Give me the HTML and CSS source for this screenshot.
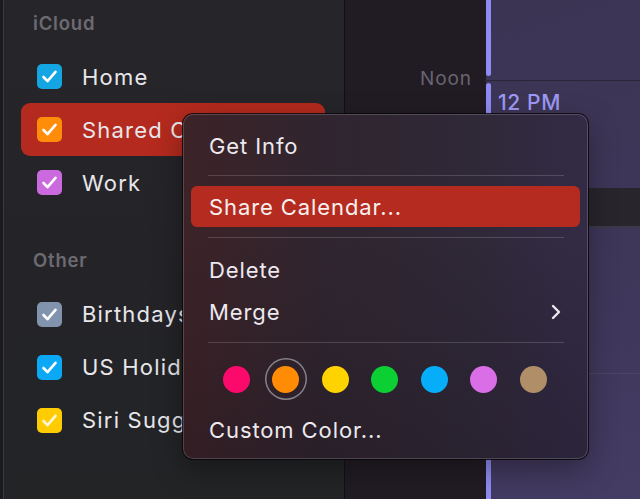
FILE: index.html
```html
<!DOCTYPE html>
<html lang="en">
<head>
<meta charset="utf-8">
<title>Calendar</title>
<link rel="stylesheet" href="styles.css">
</head>
<body>
<div class="app">
  <div class="edge"></div>
  <aside class="sidebar">
    <div class="section-title first">iCloud</div>
    <div class="cal-row"><span class="check c-home"><svg viewBox="0 0 25 25"><path d="M6.5 13 L10.5 17.2 L18.5 7.8"/></svg></span><span class="cal-name">Home</span></div>
    <div class="cal-row selected"><span class="check c-shared"><svg viewBox="0 0 25 25"><path d="M6.5 13 L10.5 17.2 L18.5 7.8"/></svg></span><span class="cal-name">Shared Calendar</span></div>
    <div class="cal-row"><span class="check c-work"><svg viewBox="0 0 25 25"><path d="M6.5 13 L10.5 17.2 L18.5 7.8"/></svg></span><span class="cal-name">Work</span></div>
    <div class="section-title second">Other</div>
    <div class="cal-row"><span class="check c-bday"><svg viewBox="0 0 25 25"><path d="M6.5 13 L10.5 17.2 L18.5 7.8"/></svg></span><span class="cal-name">Birthdays</span></div>
    <div class="cal-row"><span class="check c-us"><svg viewBox="0 0 25 25"><path d="M6.5 13 L10.5 17.2 L18.5 7.8"/></svg></span><span class="cal-name">US Holidays</span></div>
    <div class="cal-row"><span class="check c-siri"><svg viewBox="0 0 25 25"><path d="M6.5 13 L10.5 17.2 L18.5 7.8"/></svg></span><span class="cal-name">Siri Suggestions</span></div>
  </aside>
  <div class="timecol">
    <div class="time-label">Noon</div>
  </div>
  <div class="eventcol">
    <div class="ev-top"><div class="bar bar-top"></div><div class="ev-fill"></div></div>
    <div class="hour-line"></div>
    <div class="ev-bottom">
      <div class="bar bar-bottom"></div>
      <div class="ev-body">
        <div class="ev-time">12 PM</div>
        <div class="ev-band"></div>
        <div class="ev-line"></div>
      </div>
    </div>
  </div>
</div>

<div class="menu">
  <div class="menu-item">Get Info</div>
  <div class="menu-sep"></div>
  <div class="menu-item active">Share Calendar...</div>
  <div class="menu-sep sep2"></div>
  <div class="menu-item tall">Delete</div>
  <div class="menu-item tall has-sub">Merge<svg class="chev" viewBox="0 0 12 16"><path d="M3 2 L9 8 L3 14"/></svg></div>
  <div class="menu-sep sep3"></div>
  <div class="swatches">
    <span class="sw"><span class="dot d-pink"></span></span>
    <span class="sw current"><span class="dot d-orange"></span></span>
    <span class="sw"><span class="dot d-yellow"></span></span>
    <span class="sw"><span class="dot d-green"></span></span>
    <span class="sw"><span class="dot d-blue"></span></span>
    <span class="sw"><span class="dot d-purple"></span></span>
    <span class="sw"><span class="dot d-brown"></span></span>
  </div>
  <div class="menu-item tall">Custom Color...</div>
</div>
</body>
</html>
```

FILE: styles.css
```css
* { box-sizing: border-box; margin: 0; padding: 0; }
html, body { width: 640px; height: 499px; overflow: hidden; }
body {
  font-family: Inter, "Liberation Sans", sans-serif;
  background: #1c1b1f;
  color: #e9e7ec;
}
.app { display: flex; height: 499px; }
.edge { width: 3px; background: #1b1a1e; flex: none; }
.sidebar {
  width: 342px;
  flex: none;
  border-left: 1px solid #3a393f;
  border-right: 1px solid #121014;
  background: linear-gradient(to bottom, #262529 0%, #242428 60%, #222426 100%);
  padding: 0 19px 0 17px;
  overflow: hidden;
}
.section-title {
  font-size: 18.5px;
  font-weight: 600;
  letter-spacing: 0.8px;
  color: #6c6b71;
  padding-left: 12px;
  line-height: 22px;
}
.section-title.first { padding-top: 12px; height: 50px; }
.section-title.second { padding-top: 40px; height: 78px; margin-bottom: 0.5px; }
.cal-row {
  height: 53px;
  display: flex;
  align-items: center;
  padding-left: 16px;
  border-radius: 9px;
  white-space: nowrap;
  overflow: hidden;
}
.cal-row.selected { background: #b42a1e; }
.check {
  width: 25px; height: 25px;
  border-radius: 5px;
  flex: none;
  display: flex;
}
.check svg { width: 25px; height: 25px; }
.check path { fill: none; stroke: #fff; stroke-width: 2.6; stroke-linecap: round; stroke-linejoin: round; }
.c-home { background: #14a6e2; }
.c-shared { background: #ff8d0a; }
.c-work { background: #cb6ade; }
.c-bday { background: #8294ad; }
.c-us { background: #0ba8f6; }
.c-siri { background: #ffcc02; }
.c-siri path { stroke: #fff6d8; }
.cal-name {
  margin-left: 20px;
  font-size: 22px;
  letter-spacing: 1.2px;
  color: #e8e7ec;
}

.timecol {
  width: 141px;
  flex: none;
  background: #211c24;
  padding: 67px 14px 0 0;
  text-align: right;
}
.time-label { font-size: 19px; letter-spacing: 0.9px; color: #6a6470; line-height: 24px; }

.eventcol {
  flex: 1;
  display: flex;
  flex-direction: column;
  background: linear-gradient(160deg, #3c3453 0%, #3f375a 60%, #443c63 100%);
}
.ev-top { height: 80px; display: flex; }
.bar { width: 5px; flex: none; background: #8e8cf3; }
.bar-top { height: 76px; border-radius: 0 0 3px 3px; }
.ev-fill { flex: 1; }
.hour-line { height: 1px; background: #2b2636; margin-left: -2px; }
.ev-bottom { flex: 1; display: flex; }
.bar-bottom { margin-top: 2px; border-radius: 3px 3px 0 0; }
.ev-body { flex: 1; padding-left: 7px; }
.ev-time {
  margin-top: 10px;
  font-size: 21px;
  font-weight: 500;
  letter-spacing: 0.6px;
  color: #9d99f7;
  line-height: 24px;
}
.ev-band {
  margin: 73px 0 0 -7px;
  height: 40px;
  background: #28262c;
  border-bottom: 2px solid #3c3a46;
}
.ev-line {
  margin: 145px 0 0 -7px;
  height: 1px;
  background: #4d4663;
}

.menu {
  position: absolute;
  left: 183px;
  top: 114px;
  width: 405px;
  height: 345px;
  border-radius: 10px;
  padding: 11px 8px 0 8px;
  background:
    linear-gradient(to bottom, rgba(0,0,0,0) 35%, rgba(10,5,15,0.18) 100%),
    linear-gradient(to right, #3c2328 0%, #30252f 35%, #2f2837 70%, #332b45 100%);
  box-shadow: 0 0 0 1px rgba(8,6,10,0.85), inset 0 0 0 1px rgba(255,255,255,0.17), 0 10px 30px rgba(0,0,0,0.35);
}
.menu-item {
  height: 41px;
  display: flex;
  align-items: center;
  padding: 0 17px 0 18px;
  font-size: 22px;
  letter-spacing: 0.9px;
  color: #ece9ef;
  border-radius: 6px;
}
.menu-item.tall { height: 42px; }
.menu-item.active { background: #b62b1f; color: #f6f1f0; }
.has-sub { justify-content: space-between; }
.chev { width: 12px; height: 16px; margin-right: 1px; }
.chev path { fill: none; stroke: #ece9ef; stroke-width: 2.4; stroke-linecap: round; stroke-linejoin: round; }
.menu-sep {
  height: 1px;
  background: rgba(255,255,255,0.16);
  margin: 9px 16px 10px 17px;
}
.menu-sep.sep2 { margin: 10px 16px 11px 17px; }
.menu-sep.sep3 { margin: 9px 16px 15px 17px; }
.swatches {
  display: flex;
  gap: 7.5px;
  padding-left: 24px;
  height: 42px;
  margin-bottom: 9px;
}
.sw {
  width: 42px; height: 42px;
  border-radius: 50%;
  display: flex;
  align-items: center;
  justify-content: center;
  flex: none;
}
.sw.current { box-shadow: inset 0 0 0 1.5px #85818c; }
.dot { width: 27px; height: 27px; border-radius: 50%; }
.d-pink { background: #fb0a6b; }
.d-orange { background: #ff8c04; }
.d-yellow { background: #ffd300; }
.d-green { background: #0ccf34; }
.d-blue { background: #06adf8; }
.d-purple { background: #da6ee6; }
.d-brown { background: #b08e67; }
```
